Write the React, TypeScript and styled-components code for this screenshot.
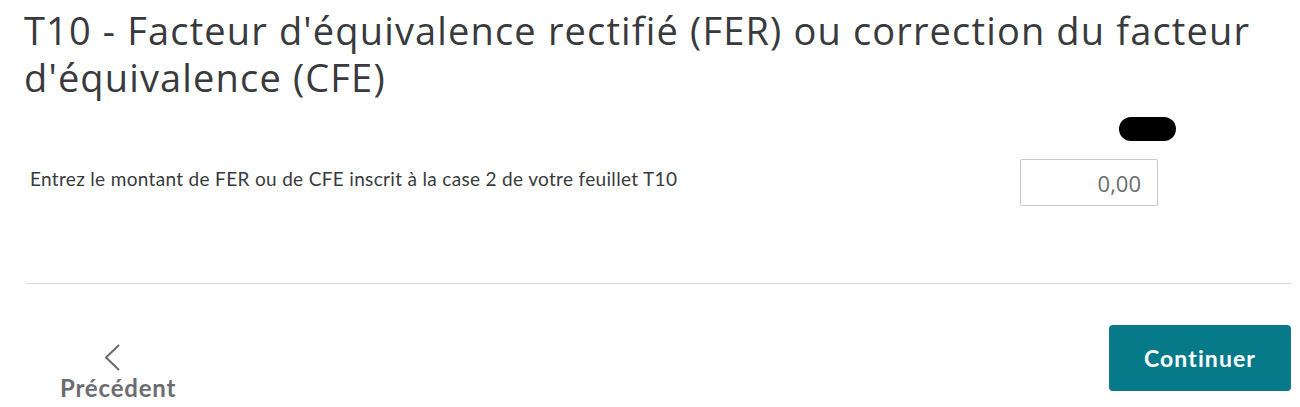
import React from 'react';
import styled, { createGlobalStyle } from 'styled-components';

const GlobalStyle = createGlobalStyle`
  html, body {
    margin: 0;
    padding: 0;
    background: #ffffff;
  }
  body {
    font-family: "Lato", "Open Sans", sans-serif;
    color: #393a3d;
  }
`;

const Page = styled.div`
  width: 1300px;
  height: 407px;
  overflow: hidden;
  box-sizing: border-box;
  padding: 0 9px 0 26px;
`;

const Title = styled.h1`
  margin: 0 0 0 -2px;
  padding-top: 7px;
  font-family: "Open Sans", sans-serif;
  font-weight: 400;
  font-size: 38px;
  line-height: 47px;
  letter-spacing: 1.15px;
  color: #393a3d;
`;

const Badge = styled.div`
  display: flex;
  justify-content: flex-end;
  padding: 16px 115px 0 0;

  span {
    display: block;
    width: 57px;
    height: 24px;
    border-radius: 12px;
    background: #000;
  }
`;

const FieldRow = styled.div`
  display: flex;
  align-items: center;
  justify-content: space-between;
  padding: 18px 133px 0 4px;
`;

const Label = styled.label`
  font-family: "Lato", sans-serif;
  font-size: 19px;
  letter-spacing: 0.33px;
  color: #393a3d;
  margin-top: -9px;
`;

const AmountInput = styled.input`
  box-sizing: border-box;
  width: 138px;
  height: 47px;
  border: 1px solid #c8c8c8;
  border-radius: 2px;
  padding: 0 16px;
  text-align: right;
  font-family: "Open Sans", sans-serif;
  font-size: 22px;
  color: #6b6c72;
  outline: none;

  &::placeholder {
    color: #6b6c72;
  }
`;

const Divider = styled.hr`
  margin: 77px 0 0 0;
  border: none;
  border-top: 1px solid #dcdcdc;
`;

const Footer = styled.div`
  display: flex;
  justify-content: space-between;
  align-items: flex-start;
  padding-top: 41px;
`;

const BackButton = styled.button`
  display: flex;
  flex-direction: column;
  align-items: center;
  gap: 3px;
  margin-left: 34px;
  margin-top: 19px;
  padding: 0;
  background: none;
  border: none;
  font-family: "Lato", sans-serif;
  font-weight: 700;
  font-size: 24px;
  line-height: 28px;
  letter-spacing: 0.8px;
  color: #6b6c72;
  cursor: pointer;

  svg {
    margin-right: 12px;
  }
`;

const PrimaryButton = styled.button`
  width: 182px;
  height: 66px;
  border: none;
  border-radius: 4px;
  background: #077a89;
  color: #ffffff;
  font-family: "Lato", sans-serif;
  font-weight: 700;
  font-size: 23px;
  letter-spacing: 1.1px;
  cursor: pointer;
`;

const Chevron = () => (
  <svg width="16" height="27" viewBox="0 0 16 27" fill="none">
    <path d="M14.5 1.5 L2 13.5 L14.5 25.5" stroke="#6b6c72" strokeWidth="2" strokeLinecap="round" strokeLinejoin="round" />
  </svg>
);

export default function App() {
  return (
    <>
      <GlobalStyle />
      <Page>
        <Title>T10 - Facteur d'équivalence rectifié (FER) ou correction du facteur d'équivalence (CFE)</Title>
        <Badge>
          <span />
        </Badge>
        <FieldRow>
          <Label htmlFor="fer">Entrez le montant de FER ou de CFE inscrit à la case 2 de votre feuillet T10</Label>
          <AmountInput id="fer" placeholder="0,00" />
        </FieldRow>
        <Divider />
        <Footer>
          <BackButton>
            <Chevron />
            Précédent
          </BackButton>
          <PrimaryButton>Continuer</PrimaryButton>
        </Footer>
      </Page>
    </>
  );
}
